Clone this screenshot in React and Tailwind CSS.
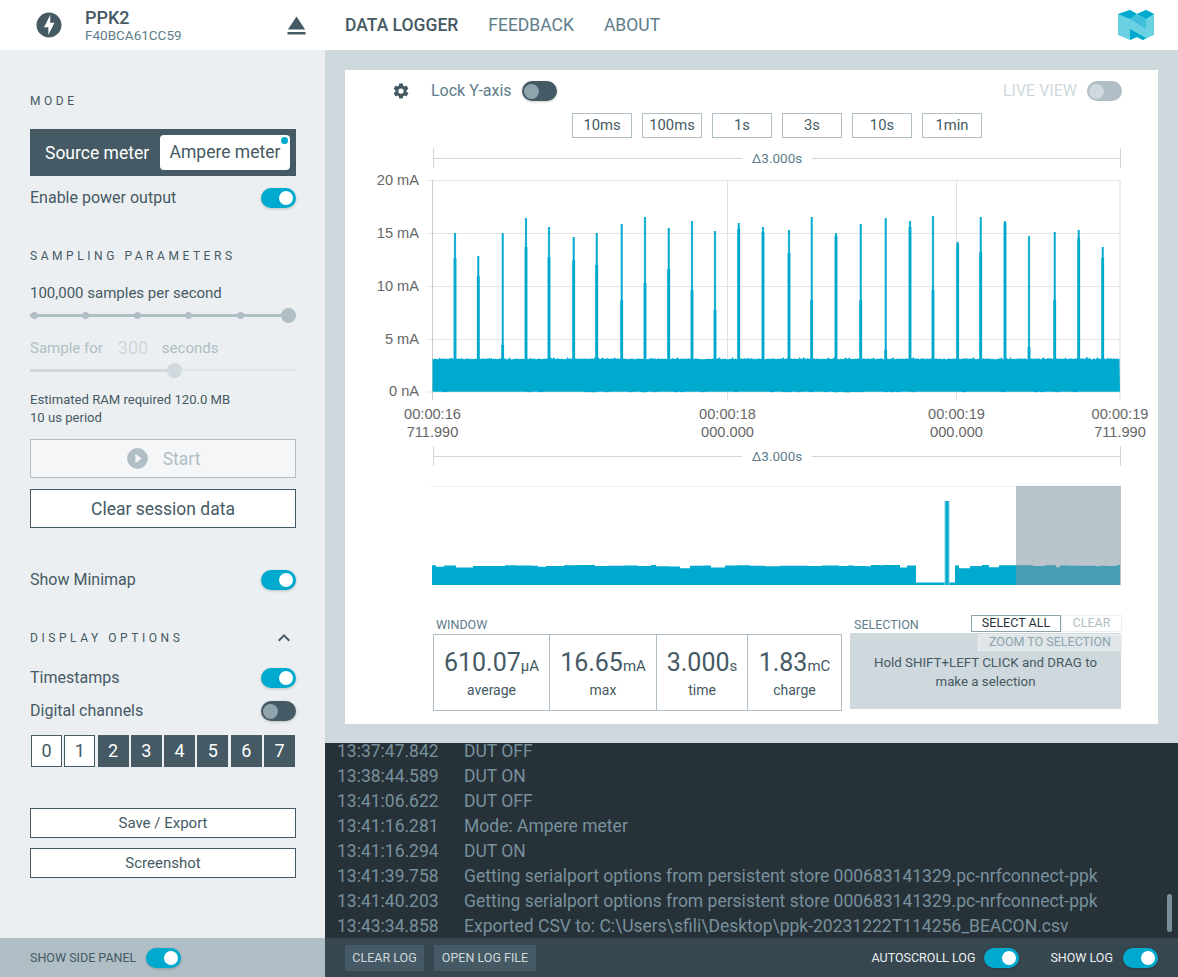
import React from 'react';

const flashPath = 'M11.5 20L16.36 10.27H13V4L8 13.73H11.5V20M12 2C14.75 2 17.1 3 19.05 4.95C21 6.9 22 9.25 22 12C22 14.75 21 17.1 19.05 19.05C17.1 21 14.75 22 12 22C9.25 22 6.9 21 4.95 19.05C3 17.1 2 14.75 2 12C2 9.25 3 6.9 4.95 4.95C6.9 3 9.25 2 12 2Z';
const ejectPath = 'M12,5L5.33,15H18.67M5,17H19V19H5V17Z';
const gearPath = 'M12,15.5A3.5,3.5 0 0,1 8.5,12A3.5,3.5 0 0,1 12,8.5A3.5,3.5 0 0,1 15.5,12A3.5,3.5 0 0,1 12,15.5M19.43,12.97C19.47,12.65 19.5,12.33 19.5,12C19.5,11.67 19.47,11.34 19.43,11L21.54,9.37C21.73,9.22 21.78,8.95 21.66,8.73L19.66,5.27C19.54,5.05 19.27,4.96 19.05,5.05L16.56,6.05C16.04,5.66 15.5,5.32 14.87,5.07L14.5,2.42C14.46,2.18 14.25,2 14,2H10C9.75,2 9.54,2.18 9.5,2.42L9.13,5.07C8.5,5.32 7.96,5.66 7.44,6.05L4.95,5.05C4.73,4.96 4.46,5.05 4.34,5.27L2.34,8.73C2.21,8.95 2.27,9.22 2.46,9.37L4.57,11C4.53,11.34 4.5,11.67 4.5,12C4.5,12.33 4.53,12.65 4.57,12.97L2.46,14.63C2.27,14.78 2.21,15.05 2.34,15.27L4.34,18.73C4.46,18.95 4.73,19.03 4.95,18.95L7.44,17.94C7.96,18.34 8.5,18.68 9.13,18.93L9.5,21.58C9.54,21.82 9.75,22 10,22H14C14.25,22 14.46,21.82 14.5,21.58L14.87,18.93C15.5,18.67 16.04,18.34 16.56,17.94L19.05,18.95C19.27,19.03 19.54,18.95 19.66,18.73L21.66,15.27C21.78,15.05 21.73,14.78 21.54,14.63L19.43,12.97Z';
const playPath = 'M10,16.5V7.5L16,12M12,2A10,10 0 0,0 2,12A10,10 0 0,0 12,22A10,10 0 0,0 22,12A10,10 0 0,0 12,2Z';
const chevronPath = 'M7.41,15.41L12,10.83L16.59,15.41L18,14L12,8L6,14L7.41,15.41Z';

const Icon = ({ d, size, className }) => (
  <svg width={size} height={size} viewBox="0 0 24 24" className={className}>
    <path d={d} fill="currentColor" />
  </svg>
);

// x, top of the thin part, top of the thick part
const spikes = [
  [455, 233, 258], [478.3, 256, 276], [502.7, 233, 345], [526, 218, 247], [549, 227, 257],
  [573.7, 237, 260], [596.7, 233, 265], [621.7, 224, 300], [645, 217, 283], [668.7, 228, 269],
  [692, 221, 290], [715, 231, 310], [738.7, 223, 229], [763, 227, 232], [789, 230, 253],
  [811.7, 217, 300], [836, 233, 236], [860.7, 224, 300], [885.7, 218, 350], [910, 221, 227],
  [933, 216, 290], [957.7, 242, 244], [980.7, 217, 252], [1005, 221, 223], [1029, 236, 347],
  [1054.7, 232, 300], [1078.7, 230, 238], [1102.7, 247, 258],
];

const makeRandom = (seed) => () => {
  seed = (seed * 16807) % 2147483647;
  return seed / 2147483647;
};

const noisePath = () => {
  const rnd = makeRandom(1234);
  let top = 'M432.5 392';
  for (let x = 432.5; x <= 1120; x += 1) {
    const bump = rnd() > 0.93 ? 1.6 : 0;
    top += `L${x} ${(358.2 + rnd() * 1.2 - bump).toFixed(1)}`;
  }
  top += 'L1120 392';
  for (let x = 1120; x >= 432.5; x -= 3) {
    top += `L${x} ${(391.8 + (rnd() > 0.85 ? 0.5 : 0)).toFixed(1)}`;
  }
  return top + 'Z';
};

const minimapPath = (from, to, seed) => {
  const rnd = makeRandom(seed);
  let d = `M${from} 99`;
  let x = from;
  while (x < to) {
    const w = Math.min(4 + Math.floor(rnd() * 14), to - x);
    const y = 79 + rnd() * 1.4 + (rnd() > 0.85 ? 1.8 : 0);
    d += `L${x} ${y.toFixed(1)}L${x + w} ${y.toFixed(1)}`;
    x += w;
  }
  return d + `L${to} 99Z`;
};

const MainChart = () => {
  const rows = [[180.5, '20 mA'], [233.5, '15 mA'], [286.5, '10 mA'], [339.5, '5 mA'], [392, '0 nA']];
  const cols = [
    [432.5, '00:00:16', '711.990'],
    [727.5, '00:00:18', '000.000'],
    [956.5, '00:00:19', '000.000'],
    [1120, '00:00:19', '711.990'],
  ];
  return (
    <svg width="813" height="277" viewBox="345 168 813 277" className="block">
      {rows.map(([y]) => (
        <line key={y} x1="427" x2="1120" y1={y} y2={y} stroke="#e5e5e5" strokeWidth="1" />
      ))}
      {cols.map(([x]) => (
        <line key={x} x1={x} x2={x} y1="180" y2="400" stroke={x === 432.5 ? '#cccccc' : '#e0e0e0'} strokeWidth="1" />
      ))}
      {spikes.map(([x, thin, thick]) => (
        <g key={x}>
          <rect x={x - 1.1} y={thin} width="2.2" height={360 - thin} fill="#55c5de" />
          <rect x={x - 0.7} y={thin} width="1.4" height={360 - thin} fill="#00a9ce" />
          <rect x={x - 1.4} y={thick} width="2.8" height={360 - thick} fill="#00a9ce" />
        </g>
      ))}
      <path d={noisePath()} fill="#00a9ce" />
      {rows.map(([y, label]) => (
        <text key={label} x="419" y={y + 4} textAnchor="end" fontSize="14.6" fill="#666666" fontFamily="'Liberation Sans', sans-serif">
          {label}
        </text>
      ))}
      {cols.map(([x, a, b], i) => (
        <text key={i} textAnchor="middle" fontSize="14.6" fill="#666666" fontFamily="'Liberation Sans', sans-serif">
          <tspan x={x} y="419">{a}</tspan>
          <tspan x={x} y="437">{b}</tspan>
        </text>
      ))}
    </svg>
  );
};

const Minimap = () => (
  <svg width="690" height="99" viewBox="0 0 690 99" className="block">
    <rect width="690" height="99" fill="#ffffff" />
    <line x1="0" x2="690" y1="0.5" y2="0.5" stroke="#eceff1" />
    <path d={minimapPath(1, 485, 77)} fill="#00a9ce" />
    <path d={minimapPath(524, 689, 991)} fill="#00a9ce" />
    <rect x="485" y="96.5" width="39" height="2.5" fill="#00a9ce" />
    <rect x="513.5" y="15" width="5" height="84" fill="#7fd3e6" />
    <rect x="514.5" y="15" width="3" height="84" fill="#00a9ce" />
    <rect x="585" y="0" width="105" height="99" fill="#7f96a1" fillOpacity="0.55" />
  </svg>
);

const NordicLogo = () => (
  <svg width="36" height="30" viewBox="0 0 36 30">
    <path d="M0 4L12 0L19 4L28 0L36 4V25L25 30L19 27L12 30L0 25Z" fill="#6ad1e3" />
    <path d="M0 4L12 0L19 4L12 9Z" fill="#00a9ce" />
    <path d="M19 4L28 0L36 4L28 9Z" fill="#00a9ce" />
    <path d="M12 9L28 19V9L19 4Z" fill="#3fc0da" />
    <path d="M12 19L28 28L25 30L19 27L12 30Z" fill="#00a9ce" />
  </svg>
);

const Toggle = ({ kind = 'on' }) => {
  if (kind === 'on') {
    return (
      <div className="flex h-5 w-[35px] shrink-0 items-center justify-end rounded-full bg-[#00a9ce] pr-[3px] shadow-[0_1px_3px_rgba(0,0,0,0.2)]">
        <div className="h-[14px] w-[14px] rounded-full bg-white" />
      </div>
    );
  }
  if (kind === 'off') {
    return (
      <div className="flex h-5 w-[35px] shrink-0 items-center rounded-full bg-[#455a64] pl-[2px] shadow-[0_1px_3px_rgba(0,0,0,0.2)]">
        <div className="h-[15px] w-[15px] rounded-full bg-[#90a4ae]" />
      </div>
    );
  }
  return (
    <div className="flex h-5 w-[35px] shrink-0 items-center rounded-full bg-[#b0bec5] pl-[2px]">
      <div className="h-[15px] w-[15px] rounded-full bg-[#cfd8dc]" />
    </div>
  );
};

const Heading = ({ children, className }) => (
  <div className={`flex h-4 items-center text-xs tracking-[3.55px] text-[#455a64] ${className}`}>{children}</div>
);

const ToggleRow = ({ label, kind, className }) => (
  <div className={`flex h-5 items-center justify-between text-base text-[#455a64] ${className}`}>
    <span>{label}</span>
    <Toggle kind={kind} />
  </div>
);

const Channel = ({ n, active }) => (
  <div
    className={`flex h-8 w-[31px] items-center justify-center text-lg ${
      active ? 'border border-[#455a64] bg-white text-[#455a64]' : 'bg-[#455a64] text-white'
    }`}
  >
    {n}
  </div>
);

const DeltaBar = ({ className }) => (
  <div className={`ml-[88px] flex h-5 w-[688px] items-center ${className}`}>
    <div className="h-full w-px bg-[#cfd8dc]" />
    <div className="h-px flex-1 bg-[#cfd8dc]" />
    <span className="px-[10px] text-[13.5px] text-[#607d8b]">Δ3.000s</span>
    <div className="h-px flex-1 bg-[#cfd8dc]" />
    <div className="h-full w-px bg-[#cfd8dc]" />
  </div>
);

const Stat = ({ value, unit, label, className }) => (
  <div className={`flex flex-col items-center justify-center border-[#b0bec5] pb-px text-[#455a64] ${className}`}>
    <div className="flex h-9 items-baseline">
      <span className="text-[25px]">{value}</span>
      <span className="text-[15px]">{unit}</span>
    </div>
    <div className="text-sm leading-5">{label}</div>
  </div>
);

const logs = [
  ['13:37:47.842', 'DUT OFF'],
  ['13:38:44.589', 'DUT ON'],
  ['13:41:06.622', 'DUT OFF'],
  ['13:41:16.281', 'Mode: Ampere meter'],
  ['13:41:16.294', 'DUT ON'],
  ['13:41:39.758', 'Getting serialport options from persistent store 000683141329.pc-nrfconnect-ppk'],
  ['13:41:40.203', 'Getting serialport options from persistent store 000683141329.pc-nrfconnect-ppk'],
  ['13:43:34.858', 'Exported CSV to: C:\\Users\\sfili\\Desktop\\ppk-20231222T114256_BEACON.csv'],
];

const windows = ['10ms', '100ms', '1s', '3s', '10s', '1min'];

const App = () => {
  return (
    <div className="flex h-screen w-full flex-col overflow-hidden bg-white font-['Roboto',sans-serif]">
      {/* Header */}
      <div className="flex h-[50px] shrink-0 items-center bg-white">
        <div className="flex w-[325px] shrink-0 items-center">
          <Icon d={flashPath} size={30} className="ml-[34px] text-[#455a64]" />
          <div className="ml-[21px] flex w-[196px] flex-col">
            <span className="text-lg leading-[20px] font-medium text-[#455a64]">PPK2</span>
            <span className="text-[13.5px] leading-[14px] text-[#607d8b]">F40BCA61CC59</span>
          </div>
          <Icon d={ejectPath} size={31} className="text-[#455a64]" />
        </div>
        <div className="ml-5 flex items-center gap-[30px] text-[17.5px] text-[#607d8b]">
          <span className="font-medium text-[#455a64]">DATA LOGGER</span>
          <span>FEEDBACK</span>
          <span>ABOUT</span>
        </div>
        <div className="mr-6 ml-auto">
          <NordicLogo />
        </div>
      </div>

      <div className="flex min-h-0 flex-1">
        {/* Side panel */}
        <div className="flex w-[325px] shrink-0 flex-col">
          <div className="flex-1 bg-[#eceff1] pr-[29px] pl-[30px]">
            <Heading className="mt-[43px]">MODE</Heading>
            <div className="mt-5 flex h-[47px] items-center bg-[#455a64] pt-px pr-[6px] pl-[15px] text-[17.5px]">
              <span className="text-white">Source meter</span>
              <div className="relative ml-auto flex h-[35px] w-[130px] -translate-y-px items-center justify-center rounded-sm bg-white pt-px text-[#455a64]">
                Ampere meter
                <div className="absolute top-[2px] right-[2px] h-[7px] w-[7px] rounded-full bg-[#00a9ce]" />
              </div>
            </div>
            <ToggleRow label="Enable power output" kind="on" className="mt-3" />

            <Heading className="mt-10">SAMPLING PARAMETERS</Heading>
            <div className="mt-[19px] h-5 text-[15px] leading-5 text-[#455a64]">100,000 samples per second</div>
            <div className="relative mt-1 flex h-4 items-center pl-[0.5px]">
              <div className="absolute inset-x-0 h-[3px] bg-[#b0bec5]" />
              <div className="flex gap-[44.5px]">
                {[0, 1, 2, 3, 4].map((i) => (
                  <div key={i} className="relative h-[7px] w-[7px] rounded-full bg-[#b0bec5]" />
                ))}
              </div>
              <div className="relative ml-auto h-[15px] w-[15px] rounded-full bg-[#b0bec5]" />
            </div>
            <div className="mt-[13px] flex h-6 items-center text-[15px] text-[#b0bec5]">
              <span>Sample for</span>
              <span className="mx-[15px] w-[29px] text-center text-lg text-[#cfd8dc]">300</span>
              <span>seconds</span>
            </div>
            <div className="relative mt-[2px] flex h-4 items-center">
              <div className="absolute inset-x-0 h-[2px] bg-[#dfe4e7]" />
              <div className="absolute left-0 h-[3px] w-[140px] bg-[#cfd8dc]" />
              <div className="relative ml-[137px] h-[15px] w-[15px] rounded-full bg-[#cfd8dc]" />
            </div>
            <div className="mt-[13px] text-[13.1px] leading-[18px] text-[#455a64]">
              <div>Estimated RAM required 120.0 MB</div>
              <div>10 us period</div>
            </div>
            <div className="mt-3 flex h-[39px] items-center justify-center gap-[13px] border border-[#b0bec5] bg-[#f4f6f7] pr-px text-[17.5px] text-[#b0bec5]">
              <Icon d={playPath} size={25} />
              <span className="pt-[2px]">Start</span>
            </div>
            <div className="mt-[11px] flex h-[39px] items-center justify-center border border-[#455a64] bg-white pt-[2px] text-[17.5px] text-[#455a64]">
              Clear session data
            </div>
            <ToggleRow label="Show Minimap" kind="on" className="mt-[42px]" />

            <div className="mt-10 flex h-4 items-center justify-between">
              <Heading>DISPLAY OPTIONS</Heading>
              <Icon d={chevronPath} size={24} className="text-[#455a64]" />
            </div>
            <ToggleRow label="Timestamps" kind="on" className="mt-[22px]" />
            <ToggleRow label="Digital channels" kind="off" className="mt-[13px]" />
            <div className="mt-[14px] ml-px flex w-[264px] justify-between">
              {[0, 1, 2, 3, 4, 5, 6, 7].map((n) => (
                <Channel key={n} n={n} active={n < 2} />
              ))}
            </div>
            <div className="mt-[41px] flex h-[30px] items-center justify-center border border-[#455a64] bg-white text-[15px] text-[#455a64]">
              Save / Export
            </div>
            <div className="mt-[10px] flex h-[30px] items-center justify-center border border-[#455a64] bg-white text-[15px] text-[#455a64]">
              Screenshot
            </div>
          </div>
          <div className="flex h-[39px] shrink-0 items-center gap-[10px] bg-[#b0bec5] pl-[30px] text-[12.5px] text-[#455a64]">
            <span className="pt-[2px]">SHOW SIDE PANEL</span>
            <Toggle />
          </div>
        </div>

        {/* Main */}
        <div className="flex min-w-0 flex-1 flex-col">
          <div className="h-[693px] shrink-0 bg-[#cfd8dc] p-5 pb-0">
            <div className="h-[654px] bg-white">
              <div className="flex items-center pt-[11px] pr-[36px] pl-[47px]">
                <Icon d={gearPath} size={18} className="text-[#455a64]" />
                <span className="ml-[21px] text-base leading-5 text-[#607d8b]">Lock Y-axis</span>
                <div className="ml-[10px]">
                  <Toggle kind="off" />
                </div>
                <span className="ml-auto text-base leading-5 text-[#cfd8dc]">LIVE VIEW</span>
                <div className="ml-[10px]">
                  <Toggle kind="disabled" />
                </div>
              </div>
              <div className="mt-3 ml-[88px] flex w-[688px] justify-center gap-[10px]">
                {windows.map((w) => (
                  <div key={w} className="flex h-[25px] w-[60px] items-center justify-center border border-[#b0bec5] text-[14.8px] text-[#455a64]">
                    {w}
                  </div>
                ))}
              </div>
              <DeltaBar className="mt-[10px]" />
              <MainChart />
              <DeltaBar className="mt-px" />
              <div className="mt-5 ml-[86px] w-[690px]">
                <Minimap />
              </div>
              <div className="mt-[30px] flex">
                <div className="ml-[88px] w-[409px]">
                  <div className="flex h-[19px] items-center pt-[2px] pl-[3px] text-[12.5px] text-[#607d8b]">WINDOW</div>
                  <div className="flex h-[77px] border border-[#b0bec5]">
                    <Stat value="610.07" unit="μA" label="average" className="w-[116px] border-r" />
                    <Stat value="16.65" unit="mA" label="max" className="w-[107px] border-r" />
                    <Stat value="3.000" unit="s" label="time" className="w-[91px] border-r" />
                    <Stat value="1.83" unit="mC" label="charge" className="flex-1" />
                  </div>
                </div>
                <div className="ml-2 w-[271px]">
                  <div className="flex h-[18px] items-start">
                    <span className="mt-[2px] pl-1 text-[12.5px] leading-[16px] text-[#607d8b]">SELECTION</span>
                    <div className="-mr-px ml-auto flex h-[17px] text-[12.5px]">
                      <div className="flex w-[90px] items-center justify-center border border-[#90a4ae] bg-white text-[#263238]">SELECT ALL</div>
                      <div className="flex w-[61px] items-center justify-center border border-[#eceff1] bg-white text-[#b0bec5]">CLEAR</div>
                    </div>
                  </div>
                  <div className="h-[76px] bg-[#cfd8dc] pt-px">
                    <div className="-mr-px ml-auto flex h-[17px] w-[144px] items-center justify-center border border-[#eceff1] bg-[#dfe5e8] text-[12.5px] text-[#90a4ae]">
                      ZOOM TO SELECTION
                    </div>
                    <div className="mt-[2px] text-center text-[13.3px] leading-[19px] text-[#455a64]">
                      <div>Hold SHIFT+LEFT CLICK and DRAG to</div>
                      <div>make a selection</div>
                    </div>
                  </div>
                </div>
              </div>
            </div>
          </div>

          {/* Log */}
          <div className="relative flex min-h-0 flex-1 flex-col justify-end overflow-hidden bg-[#263238] pl-3">
            <div className="-mb-px">
              {logs.map(([time, msg]) => (
                <div key={time} className="flex h-[25px] shrink-0 items-center text-[17.5px] text-[#78909c]">
                  <span className="w-[127px] shrink-0">{time}</span>
                  <span className="whitespace-nowrap">{msg}</span>
                </div>
              ))}
            </div>
            <div className="absolute top-[151px] right-[6px] h-[38px] w-[5px] rounded-full bg-[#78909c]" />
          </div>
          <div className="flex h-[39px] shrink-0 items-center bg-[#37474f] pr-5 pl-5 text-[12.5px]">
            <div className="flex h-[26px] w-[79px] items-center justify-center bg-[#455a64] pt-px text-[#cfd8dc]">CLEAR LOG</div>
            <div className="ml-[10px] flex h-[26px] w-[102px] items-center justify-center bg-[#455a64] pt-px text-[#cfd8dc]">OPEN LOG FILE</div>
            <span className="ml-auto pt-[2px] text-[#eceff1]">AUTOSCROLL LOG</span>
            <div className="ml-[9px]">
              <Toggle />
            </div>
            <span className="ml-[31px] pt-[2px] text-[#eceff1]">SHOW LOG</span>
            <div className="ml-[10px]">
              <Toggle />
            </div>
          </div>
        </div>
      </div>
    </div>
  );
};

export default App;
